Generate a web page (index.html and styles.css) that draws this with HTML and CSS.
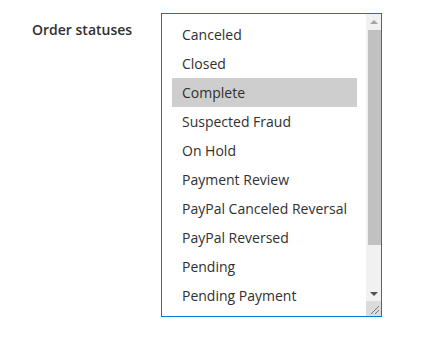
FILE: index.html
```html
<!DOCTYPE html>
<html lang="en">
<head>
    <meta charset="UTF-8">
    <meta name="viewport" content="width=device-width, initial-scale=1.0">
    <title>Order statuses</title>
    <link rel="stylesheet" href="styles.css">
</head>
<body>
    <main class="field">
        <label class="field-label">Order statuses</label>
        <div class="multiselect">
            <ul class="options">
                <li class="option">Canceled</li>
                <li class="option">Closed</li>
                <li class="option selected">Complete</li>
                <li class="option">Suspected Fraud</li>
                <li class="option">On Hold</li>
                <li class="option">Payment Review</li>
                <li class="option">PayPal Canceled Reversal</li>
                <li class="option">PayPal Reversed</li>
                <li class="option">Pending</li>
                <li class="option">Pending Payment</li>
            </ul>
            <div class="scrollbar">
                <div class="arrow up"></div>
                <div class="track">
                    <div class="thumb"></div>
                </div>
                <div class="arrow down"></div>
                <div class="resizer">
                    <svg width="15" height="15" viewBox="0 0 15 15">
                        <path d="M5 13 L13 5 M9 13 L13 9" stroke="#7a7a7a" stroke-width="1" fill="none" />
                    </svg>
                </div>
            </div>
        </div>
    </main>
</body>
</html>
```

FILE: styles.css
```css
body {
    margin: 0;
    font-family: "Open Sans", "Liberation Sans", sans-serif;
    font-size: 14px;
    color: #303030;
    background-color: #fff;
}

.field {
    display: flex;
    align-items: flex-start;
    padding: 13px 0 0 32px;
}

.field-label {
    width: 129px;
    margin-top: 7px;
    font-weight: 600;
    line-height: 19px;
}

.multiselect {
    display: flex;
    width: 219px;
    height: 302px;
    border: 1px solid #007bdb;
    overflow: hidden;
}

.options {
    flex: 1;
    list-style: none;
    margin: 0;
    padding: 6px 9px 6px 10px;
    overflow: hidden;
}

.option {
    padding: 5px 10px;
    line-height: 19px;
    white-space: nowrap;
}

.option.selected {
    background-color: #cecece;
}

.scrollbar {
    width: 15px;
    display: flex;
    flex-direction: column;
    background-color: #f1f1f1;
}

.arrow {
    height: 15px;
    display: flex;
    align-items: center;
    justify-content: center;
}

.arrow::before {
    content: "";
    border-left: 4px solid transparent;
    border-right: 4px solid transparent;
}

.arrow.up::before {
    border-bottom: 4px solid #a3a3a3;
}

.arrow.down::before {
    border-top: 4px solid #505050;
}

.track {
    flex: 1;
    padding: 1px 0 0 2px;
}

.thumb {
    height: 215px;
    background-color: #c1c1c1;
}

.resizer {
    height: 15px;
    background-color: #dcdcdc;
}

.resizer svg {
    display: block;
}
```
